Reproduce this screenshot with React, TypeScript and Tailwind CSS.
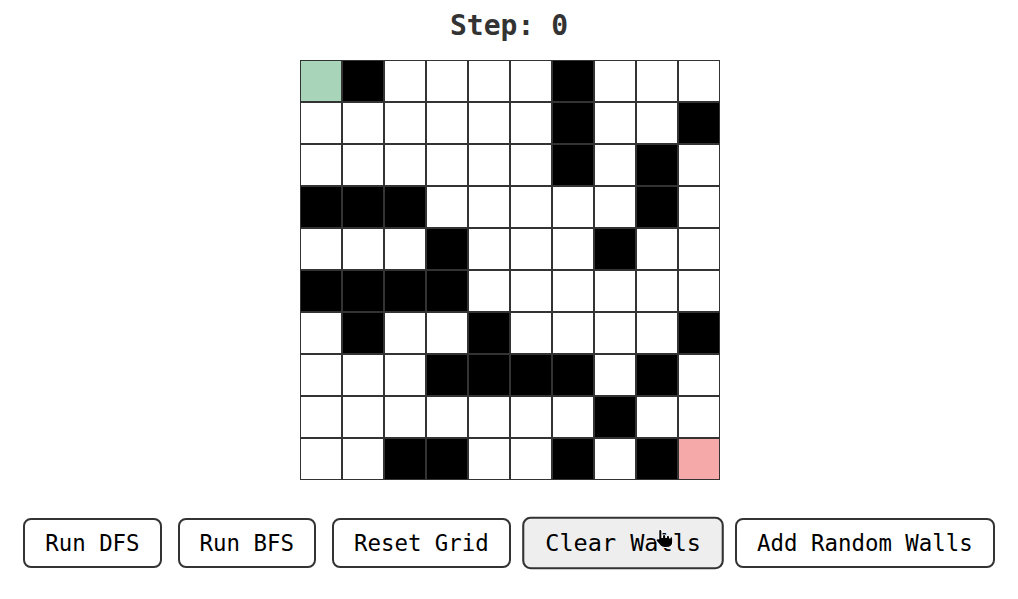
import React from 'react'

// 1 = wall, 0 = empty; start top-left, end bottom-right
const GRID: number[][] = [
  [0, 1, 0, 0, 0, 0, 1, 0, 0, 0],
  [0, 0, 0, 0, 0, 0, 1, 0, 0, 1],
  [0, 0, 0, 0, 0, 0, 1, 0, 1, 0],
  [1, 1, 1, 0, 0, 0, 0, 0, 1, 0],
  [0, 0, 0, 1, 0, 0, 0, 1, 0, 0],
  [1, 1, 1, 1, 0, 0, 0, 0, 0, 0],
  [0, 1, 0, 0, 1, 0, 0, 0, 0, 1],
  [0, 0, 0, 1, 1, 1, 1, 0, 1, 0],
  [0, 0, 0, 0, 0, 0, 0, 1, 0, 0],
  [0, 0, 1, 1, 0, 0, 1, 0, 1, 0],
]

function cellClass(r: number, c: number) {
  if (r === 0 && c === 0) return 'bg-[#a8d5ba]'
  if (r === 9 && c === 9) return 'bg-[#f5a9a9]'
  return GRID[r][c] ? 'bg-black' : 'bg-white'
}

function HandCursor() {
  return (
    <svg className="absolute left-[632px] top-[10px] w-[18px] h-[21px] pointer-events-none" viewBox="0 0 14 20" preserveAspectRatio="none">
      <path
        d="M4 1.5c.8 0 1.4.6 1.4 1.4V9h.4V7.6c0-.8.6-1.3 1.3-1.3s1.3.5 1.3 1.3V9h.4V8.4c0-.8.6-1.3 1.3-1.3s1.3.5 1.3 1.3V9.5h.2c0-.7.5-1.1 1.1-1.1s1.1.5 1.1 1.1v4.2c0 2.7-2 4.8-4.6 4.8H7.4c-1.4 0-2.6-.7-3.4-1.8L1 12.3c-.4-.6-.3-1.4.3-1.8.6-.4 1.3-.3 1.7.2l-.1-.1V2.9c0-.8.4-1.4 1.1-1.4z"
        fill="#000"
        stroke="#fff"
        strokeWidth="0.9"
      />
    </svg>
  )
}

const BUTTONS = ['Run DFS', 'Run BFS', 'Reset Grid', 'Clear Walls', 'Add Random Walls']

export default function App() {
  return (
    <div className="min-h-screen bg-white flex flex-col items-center pt-[10px] text-[#333] font-['DejaVu_Sans_Mono',monospace]">
      <h1 className="text-[28px] font-bold leading-[1.164] mb-[17px]">Step: 0</h1>

      <div className="grid grid-cols-[repeat(10,42px)] ml-[2px]">
        {GRID.map((row, r) =>
          row.map((_, c) => (
            <div key={`${r}-${c}`} className={`w-[42px] h-[42px] border border-[#333] ${cellClass(r, c)}`} />
          ))
        )}
      </div>

      <div className="relative flex items-center justify-center gap-4 mt-[38px]">
        {BUTTONS.map((label) => (
          <button
            key={label}
            className={`px-5 py-[10px] text-[22.4px] leading-[1.164] text-black border-2 border-[#333] rounded-lg font-['DejaVu_Sans_Mono',monospace] ${
              label === 'Clear Walls' ? 'bg-[#eee] scale-105' : 'bg-white'
            }`}
          >
            {label}
          </button>
        ))}
        <HandCursor />
      </div>
    </div>
  )
}
